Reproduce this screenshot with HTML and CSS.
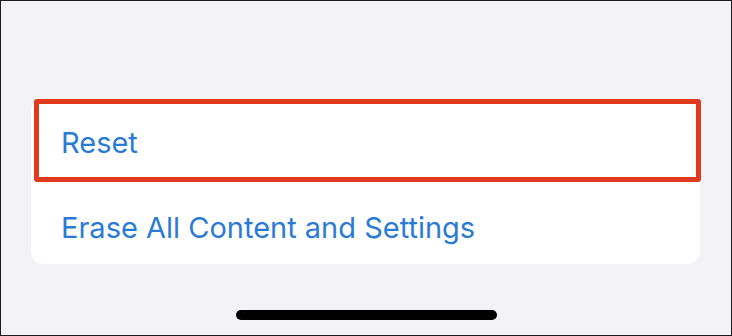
FILE: index.html
```html
<!DOCTYPE html>
<html>
<head>
<meta charset="utf-8">
<link rel="stylesheet" href="styles.css">
</head>
<body>
<div class="frame">
  <div class="card">
    <div class="row highlighted"><span class="label">Reset</span></div>
    <div class="row"><span class="label">Erase All Content and Settings</span></div>
  </div>
  <div class="home-bar"></div>
</div>
</body>
</html>
```
FILE: styles.css
```css
html, body {
  margin: 0;
  padding: 0;
}
body {
  width: 732px;
  height: 336px;
  overflow: hidden;
  font-family: "Inter", "Liberation Sans", sans-serif;
}
.frame {
  box-sizing: border-box;
  width: 732px;
  height: 336px;
  border: 1px solid #1c1c1c;
  background: #f2f2f7;
  padding: 98px 31px 0 30px;
  display: flex;
  flex-direction: column;
}
.card {
  background: #ffffff;
  border-radius: 13px;
  display: flex;
  flex-direction: column;
}
.row {
  box-sizing: border-box;
  height: 83px;
  display: flex;
  align-items: center;
  padding-left: 30px;
  padding-top: 4px;
  position: relative;
}
.row + .row {
  height: 82px;
  padding-top: 8px;
}
.label {
  font-size: 29px;
  color: #2a7bd6;
  letter-spacing: 0;
}
.highlighted::after {
  content: "";
  position: absolute;
  top: 0;
  left: 3px;
  right: -1px;
  bottom: 0;
  border: 5px solid #e03a1e;
  border-radius: 3px;
}
.home-bar {
  align-self: center;
  width: 261px;
  height: 10px;
  border-radius: 5px;
  background: #000;
  margin-top: 46px;
  margin-left: 2px;
}
```
